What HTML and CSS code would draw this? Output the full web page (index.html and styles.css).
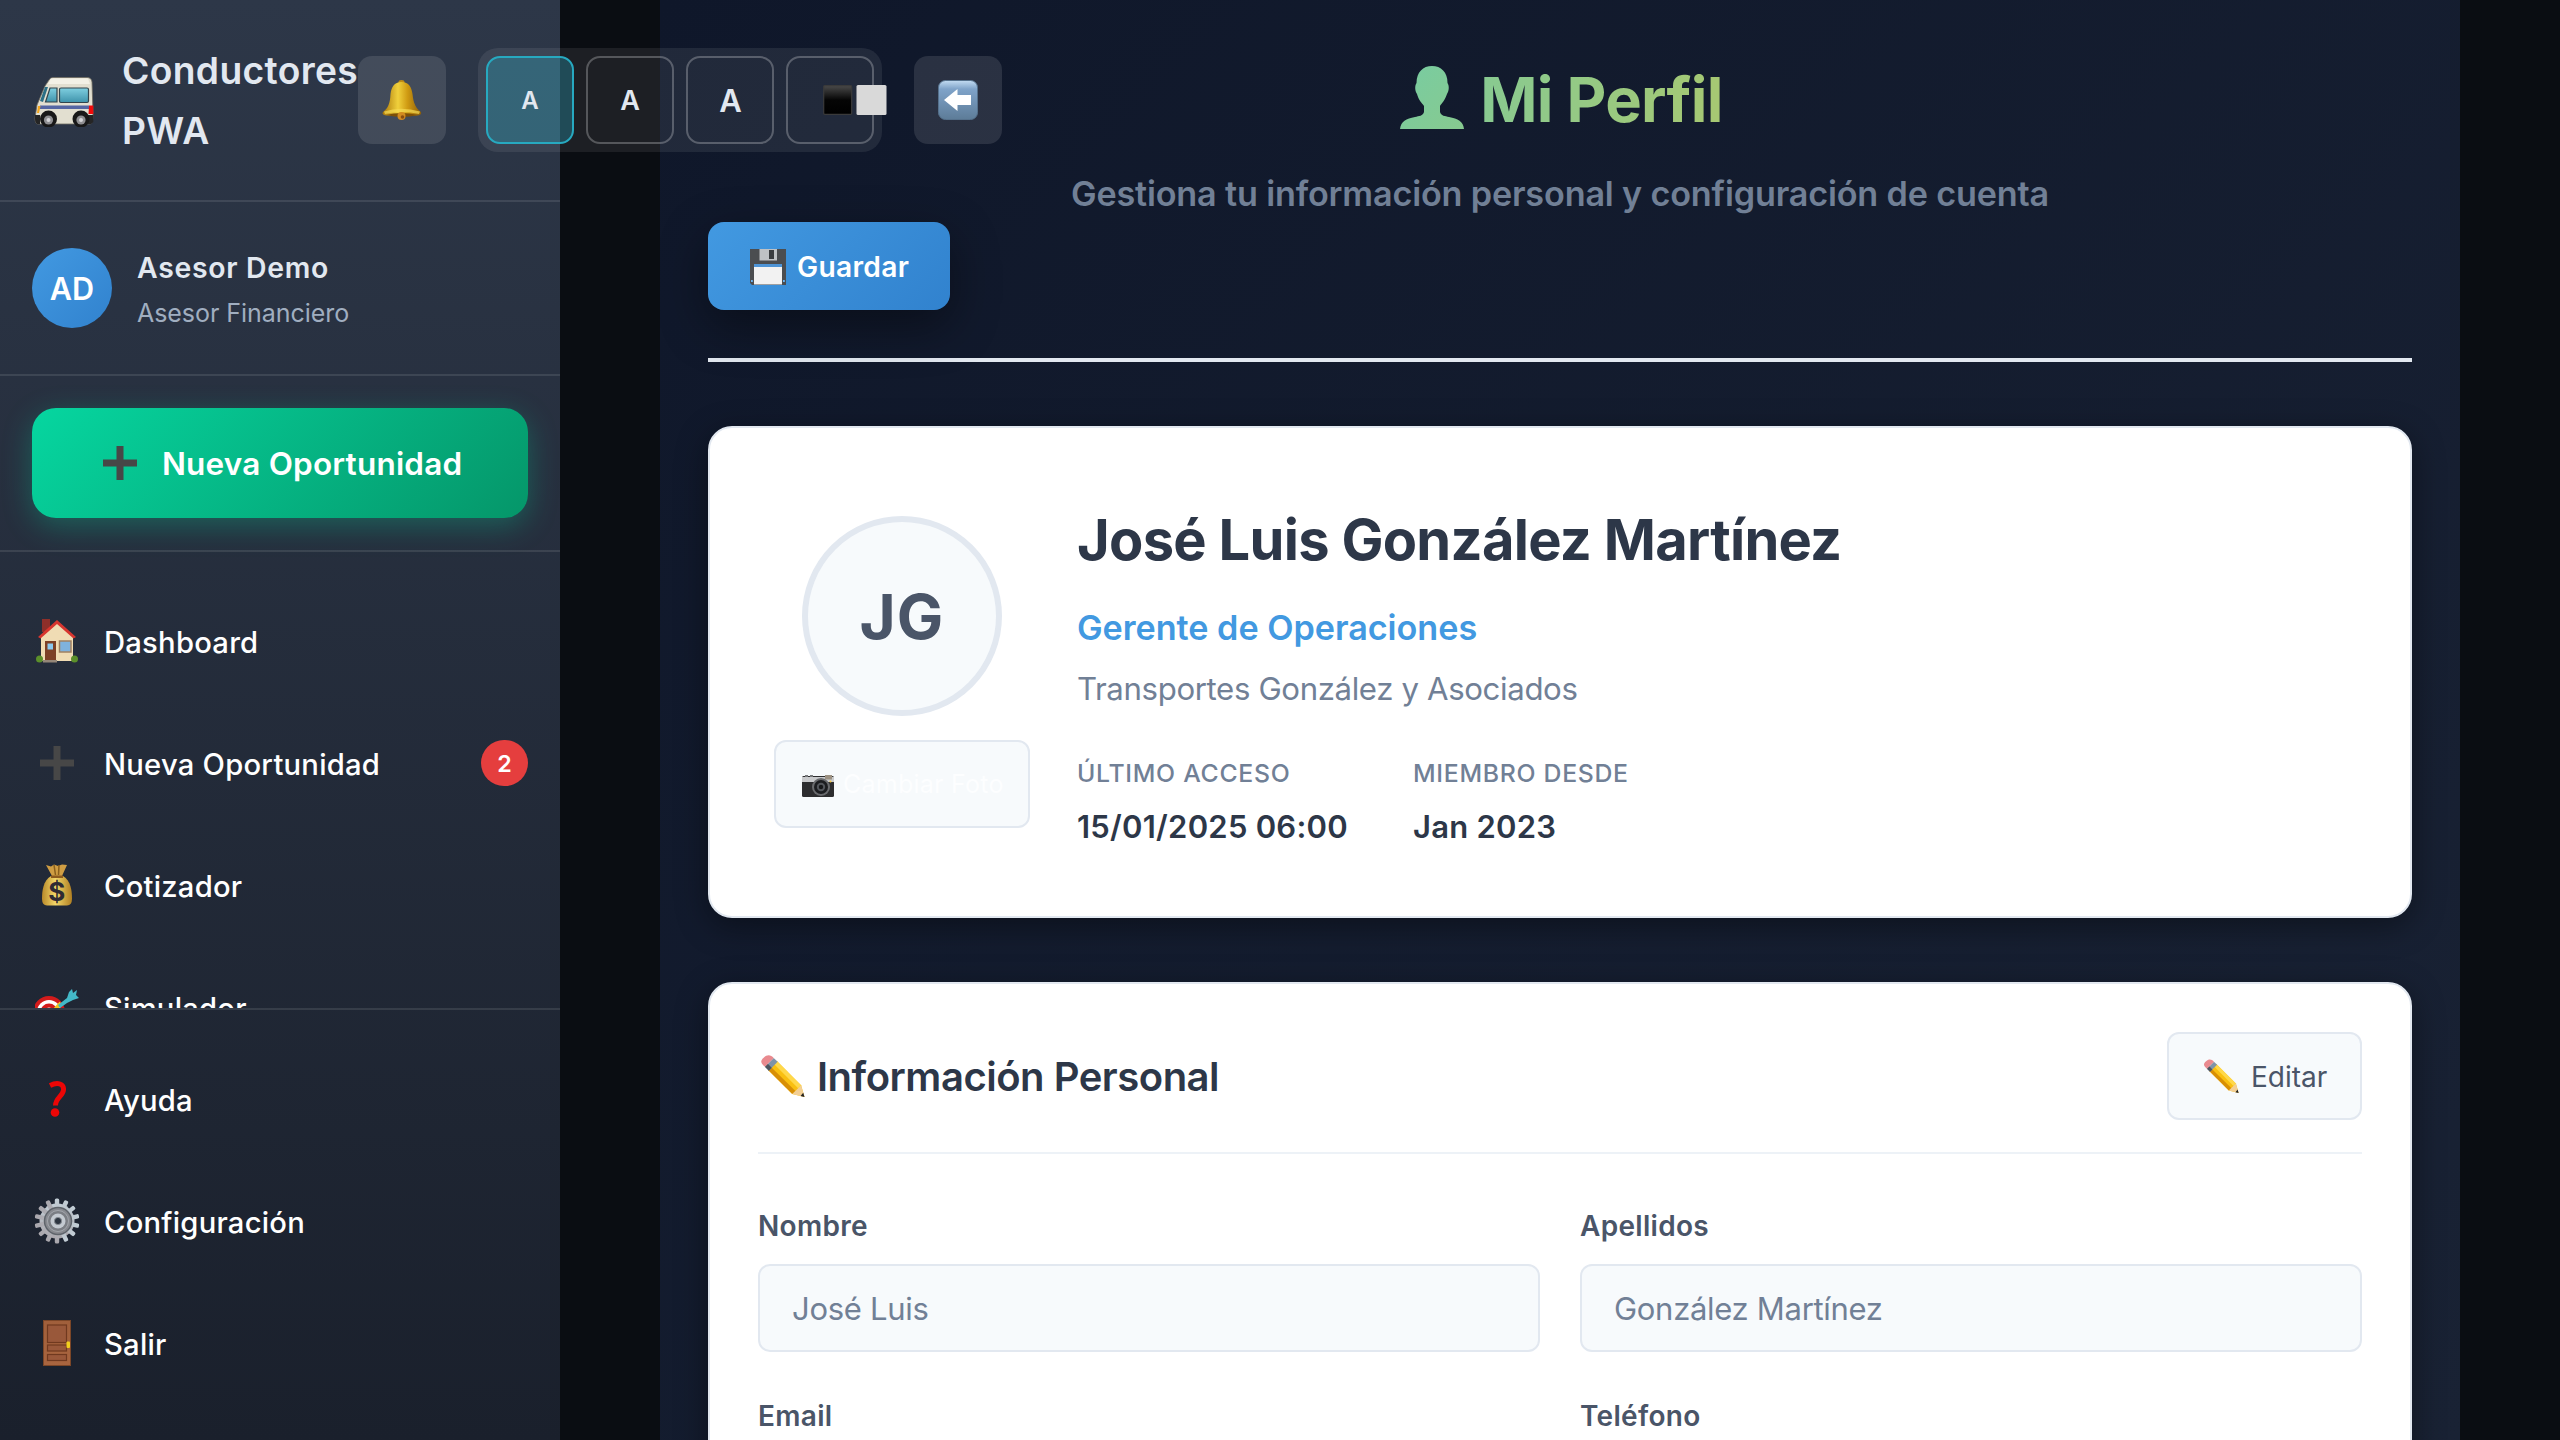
FILE: index.html
```html
<!DOCTYPE html>
<html lang="es">
<head>
<meta charset="utf-8">
<title>Mi Perfil - Conductores PWA</title>
<link rel="stylesheet" href="styles.css">
</head>
<body>
<svg class="defs" width="0" height="0" aria-hidden="true">
  <defs>
    <linearGradient id="wood" x1="0" y1="0" x2="0" y2="1"><stop offset="0" stop-color="#a05f3b"/><stop offset="1" stop-color="#a9653f"/></linearGradient>
    <linearGradient id="glass" x1="0" y1="0" x2="0" y2="1"><stop offset="0" stop-color="#7fcfe0"/><stop offset="1" stop-color="#3f93ab"/></linearGradient>
    <linearGradient id="gold" x1="0" y1="0" x2="1" y2="0"><stop offset="0" stop-color="#a87408"/><stop offset=".4" stop-color="#f0d03c"/><stop offset=".65" stop-color="#cf9a12"/><stop offset="1" stop-color="#8a5c08"/></linearGradient>
    <linearGradient id="sack" x1="0" y1="0" x2="1" y2="0"><stop offset="0" stop-color="#b98a2a"/><stop offset=".45" stop-color="#f3d769"/><stop offset="1" stop-color="#b07f22"/></linearGradient>
    <linearGradient id="steel" x1="0" y1="0" x2="0" y2="1"><stop offset="0" stop-color="#c3ced6"/><stop offset="1" stop-color="#a9a6ac"/></linearGradient>
    <linearGradient id="key" x1="0" y1="0" x2="0" y2="1"><stop offset="0" stop-color="#c3dcf2"/><stop offset=".22" stop-color="#7fa3c9"/><stop offset="1" stop-color="#5d7c98"/></linearGradient>
    <linearGradient id="ink" x1="0" y1="0" x2="0" y2="1"><stop offset="0" stop-color="#4a4a4a"/><stop offset=".5" stop-color="#050505"/><stop offset="1" stop-color="#000"/></linearGradient>
    <linearGradient id="bust" x1="0" y1="0" x2="1" y2="1"><stop offset="0" stop-color="#78cca2"/><stop offset="1" stop-color="#87ca8f"/></linearGradient>
    <symbol id="plus" viewBox="0 0 34 34"><path d="M13.5 0h7v13.500H34v7H20.500V34h-7V20.500H0v-7h13.500z" fill="#474747"/></symbol>
    <symbol id="pencil" viewBox="0 0 46 44">
      <path d="M8 15 17 6 42 31 45.500 43 33 40z" fill="#f9bf10"/>
      <path d="M8 15 11 12 36.500 37 33 40z" fill="#d88f06"/>
      <path d="M14 9 17 6 42 31 39 34z" fill="#ffd84a"/>
      <path d="M33 40 42 31 45.500 43z" fill="#f3cf94"/>
      <path d="M41.500 42 44.200 38.500 45.500 43z" fill="#222"/>
      <path d="M5 12 14 3 18 7 9 16z" fill="#7f93a8"/>
      <path d="M5 12 8 9 12 13 9 16z" fill="#4d5660"/>
      <path d="M5 12 14 3C11-.500 7-.500 4 2.500-.500 6 1 9 5 12z" fill="#e98a8f"/>
    </symbol>
  </defs>
</svg>
<div class="app">
  <aside class="sidebar">
    <header class="sidebar-header">
      <div class="brand">
        <svg class="brand-icon" viewBox="0 0 60 50">
          <path d="M15 3Q16 .500 19 .500H53Q57.500.500 58 5L59 36Q59 47 56 47H4Q1 47 1 41L3 28 11 9Z" fill="#e2dfd0" stroke="#6d6a60" stroke-width=".8"/>
          <path d="M17 1.500H54L56 7H14Z" fill="#f3f1e6"/>
          <path d="M11 10 14 10 9 25 6 24Z" fill="#2c6f86"/>
          <path d="M16 11H23V25H11.500Z" fill="url(#glass)" stroke="#33444b" stroke-width="1.200"/>
          <rect x="25.500" y="11" width="29" height="14.500" rx="1.500" fill="url(#glass)" stroke="#33444b" stroke-width="1.200"/>
          <path d="M6 28.500H55V32H5Z" fill="#5566a3"/>
          <path d="M55 28.500H59.300V37H54.500Z" fill="#f00b0b"/>
          <path d="M4 29H6.500L5 36H3Z" fill="#f4a51c"/>
          <path d="M1 38H6V47H3Q1 46 1 42ZM53 38H59.300V45L57 47H53Z" fill="#252525"/>
          <circle cx="14.500" cy="42" r="8.500" fill="#181818"/><circle cx="14.500" cy="43" r="4.600" fill="#8f8f92"/><circle cx="14.500" cy="43" r="2" fill="#d5d5d8"/>
          <circle cx="47" cy="42" r="8.500" fill="#181818"/><circle cx="47" cy="43" r="4.600" fill="#8f8f92"/><circle cx="47" cy="43" r="2" fill="#d5d5d8"/>
        </svg>
        <span class="brand-name">Conductores<br>PWA</span>
      </div>
      <div class="header-controls">
        <button class="icon-button" aria-label="Notificaciones">
          <svg class="bell" viewBox="0 0 40 40">
            <ellipse cx="19.500" cy="2" rx="3" ry="2" fill="#c08c14"/>
            <path d="M19.500 2C27 2 29.500 7 30.500 14 31.500 24 34 28 39 32Q40 35 35 35.500H5Q-1 35 1 32C6 28 8 24 8.500 14 9.500 7 12 2 19.500 2Z" fill="url(#gold)"/>
            <path d="M2 31.500Q19 26 38 31.500L37 34Q20 30 3 34Z" fill="#f6dc55" opacity=".7"/>
            <path d="M4 35Q19 31 36 35Q20 39 4 35Z" fill="#7d4f08"/>
            <circle cx="19.500" cy="36" r="4" fill="#d38a20"/><circle cx="20.500" cy="37" r="1.800" fill="#8b4d0e"/>
          </svg>
        </button>
        <div class="a11y-group">
          <button class="a11y-button a11y-small is-active">A</button>
          <button class="a11y-button a11y-medium">A</button>
          <button class="a11y-button a11y-large">A</button>
          <button class="a11y-button a11y-contrast" aria-label="Contraste">
            <svg viewBox="0 0 64 30"><rect x=".700" y=".700" width="28" height="28.600" rx="1" fill="url(#ink)" stroke="#3a3a3a" stroke-width="1.200"/><rect x="33.500" width="30" height="30" rx="1.500" fill="#d9d9d9"/></svg>
          </button>
        </div>
        <button class="icon-button" aria-label="Contraer">
          <svg class="arrow" viewBox="0 0 40 40"><rect x=".5" y=".5" width="39" height="39" rx="7" fill="url(#key)" stroke="#55718c"/><path d="M6 20 19.500 9V15H33V25H19.500V31Z" fill="#fff"/></svg>
        </button>
      </div>
    </header>
    <section class="user">
      <div class="user-avatar">AD</div>
      <div class="user-text">
        <div class="user-name">Asesor Demo</div>
        <div class="user-role">Asesor Financiero</div>
      </div>
    </section>
    <section class="cta-wrap">
      <button class="cta"><svg class="cta-icon"><use href="#plus"/></svg><span>Nueva Oportunidad</span></button>
    </section>
    <nav class="nav">
      <a class="nav-item"><span class="nav-icon"><svg width="42" height="44" viewBox="0 0 42 44">
        <rect x="6" y="0" width="8" height="13" fill="#8e2f2a"/>
        <path d="M5 18 21 4 37 18V42H5Z" fill="#f0dcb4"/>
        <path d="M2 18 21 1 40 18 37.500 19.500 21 5 4.500 19.500Z" fill="#d8362f"/>
        <rect x="9" y="22" width="11" height="20" fill="#7d4026"/><rect x="11.500" y="24.500" width="5.500" height="6" fill="#8cc8ee"/>
        <rect x="23.500" y="22" width="11.500" height="11" fill="#7fb2dd" stroke="#a08060" stroke-width="1.500"/>
        <rect x="7" y="41" width="14" height="2.500" fill="#948678"/>
        <circle cx="3.500" cy="40" r="3.500" fill="#5b8f2a"/><circle cx="38.500" cy="40" r="3.500" fill="#5b8f2a"/>
      </svg></span><span>Dashboard</span></a>
      <a class="nav-item"><span class="nav-icon"><svg width="34" height="34"><use href="#plus"/></svg></span><span>Nueva Oportunidad</span><span class="badge">2</span></a>
      <a class="nav-item"><span class="nav-icon"><svg width="32" height="42" viewBox="0 0 32 42">
        <path d="M5 1 10 2.500 13 .500 17 2 21 .500 26 1 21 12H11Z" fill="#cf9d43"/>
        <path d="M13 1 14.500 11M18 1 17.500 11" stroke="#8a5f1c" stroke-width="1.500"/>
        <path d="M10 12H22C30 17 31 27 31 35Q31 41 26 41.500H6Q1 41 1 35C1 27 2 17 10 12Z" fill="url(#sack)"/>
        <path d="M10 11.500H22V14H10Z" fill="#8d5b1e"/>
        <text x="16" y="36.500" text-anchor="middle" class="coin">$</text>
      </svg></span><span>Cotizador</span></a>
      <a class="nav-item"><span class="nav-icon"><svg class="target" width="44" height="44" viewBox="0 0 44 44">
        <circle cx="14" cy="24" r="16" fill="#d31b1b"/><circle cx="14" cy="24" r="12" fill="#fff"/><circle cx="14" cy="24" r="8.500" fill="#d31b1b"/><circle cx="14" cy="24" r="4.500" fill="#fff"/>
        <path d="M18 24 26 15" stroke="#f5c51b" stroke-width="4"/><path d="M23 17 32 10 34 4 37 1 38 5 42 2 41 7 44 10 38 12 32 15 25 20Z" fill="#43b9c8"/>
      </svg></span><span>Simulador</span></a>
    </nav>
    <footer class="sidebar-footer">
      <a class="nav-item"><span class="nav-icon"><svg width="18" height="36" viewBox="0 0 18 36"><path d="M2 4.500C10 .500 16 3 15.500 9 15 15 7.500 17 7.500 24.500" fill="none" stroke="#ec0606" stroke-width="5"/><circle cx="7" cy="31.500" r="4.300" fill="#ec0606"/></svg></span><span>Ayuda</span></a>
      <a class="nav-item"><span class="nav-icon"><svg width="46" height="46" viewBox="-23 -23 46 46">
        <g fill="url(#steel)"><circle r="17.500"/>
        <g><rect x="-2.200" y="-22.500" width="4.400" height="45" rx="1.500"/><rect x="-2.200" y="-22.500" width="4.400" height="45" rx="1.500" transform="rotate(25.700)"/><rect x="-2.200" y="-22.500" width="4.400" height="45" rx="1.500" transform="rotate(51.400)"/><rect x="-2.200" y="-22.500" width="4.400" height="45" rx="1.500" transform="rotate(77.100)"/><rect x="-2.200" y="-22.500" width="4.400" height="45" rx="1.500" transform="rotate(102.800)"/><rect x="-2.200" y="-22.500" width="4.400" height="45" rx="1.500" transform="rotate(128.500)"/><rect x="-2.200" y="-22.500" width="4.400" height="45" rx="1.500" transform="rotate(154.300)"/></g></g>
        <circle cx="1" r="13.500" fill="#87898f" stroke="#5f646b" stroke-width="1.500"/><circle cx="1" r="10.500" fill="#7b7e84" stroke="#a3a7ad"/><circle cx="1" r="7.500" fill="#c4cad1"/><circle cx="1" r="3.600" fill="#2d3540" stroke="#858a91"/>
      </svg></span><span>Configuración</span></a>
      <a class="nav-item"><span class="nav-icon"><svg width="28" height="46" viewBox="0 0 28 46">
        <rect x=".5" y=".5" width="27" height="45" fill="url(#wood)" stroke="#7c4627"/>
        <g fill="#99583a" stroke="#70391f" stroke-width="1.200"><rect x="4.500" y="5" width="19" height="17.500"/><rect x="4.500" y="25" width="19" height="6"/><rect x="4.500" y="34.500" width="19" height="6"/></g>
        <rect x="23.500" y="21.500" width="3.500" height="6.500" rx="1" fill="#f2cf1d"/>
      </svg></span><span>Salir</span></a>
    </footer>
  </aside>
  <main class="content">
    <header class="page-header">
      <h1 class="page-title">
        <svg class="bust" viewBox="0 0 64 63"><path d="M32 0C41 0 47.500 6 47.500 17 49.500 20 49 25 47 28 45 34 42 37 40 40V46C41 50 45 50 49 51 58 53 63 55 64 63H0C1 55 6 53 15 51 19 50 23 50 24 46V40C22 37 18.500 34 17 28 15 25 14.500 20 16.500 17 16.500 6 23 0 32 0Z" fill="url(#bust)"/></svg>
        <span class="page-title-text">Mi Perfil</span>
      </h1>
      <p class="page-subtitle">Gestiona tu información personal y configuración de cuenta</p>
      <button class="save"><svg class="floppy" viewBox="0 0 36 36">
        <path d="M0 0H36V36H2L0 34Z" fill="#4b4d50"/><rect x="9.500" y="0" width="17.500" height="11.500" fill="#bfc1c4"/><rect x="19" y="1" width="5" height="9" fill="#3a3c3f"/>
        <rect x="4" y="15" width="28" height="20.500" fill="#f2f2f2"/><rect x="4" y="15" width="28" height="3" fill="#4e94d6"/><rect x="1" y="31" width="1.800" height="2" fill="#6bb3f0"/><rect x="33" y="31" width="1.800" height="2" fill="#6bb3f0"/>
      </svg><span>Guardar</span></button>
    </header>
    <section class="card profile">
      <div class="photo">
        <div class="photo-circle">JG</div>
        <button class="photo-button"><svg class="camera" viewBox="0 0 32 22">
          <rect y="1" width="32" height="21" rx="1.500" fill="#2d2d2f"/><rect y="2" width="32" height="5" fill="#c9cacc"/><rect x="3" y="0" width="3" height="2" fill="#77797b"/><rect x="8" y="0" width="3" height="2" fill="#77797b"/><rect x="23" y="0" width="7" height="4.500" fill="#9c9182"/>
          <circle cx="19" cy="12" r="9" fill="#6a6b6e"/><circle cx="19" cy="12" r="7" fill="#1c1d20"/><circle cx="19" cy="12" r="4.200" fill="#53565b"/><circle cx="19" cy="12" r="2.200" fill="#17181a"/><circle cx="28.500" cy="6.500" r="1" fill="#f5c842"/>
        </svg><span>Cambiar Foto</span></button>
      </div>
      <div class="profile-info">
        <h2 class="profile-name">José Luis González Martínez</h2>
        <p class="profile-role">Gerente de Operaciones</p>
        <p class="profile-company">Transportes González y Asociados</p>
        <div class="stats">
          <div class="stat"><div class="stat-label">Último acceso</div><div class="stat-value">15/01/2025 06:00</div></div>
          <div class="stat"><div class="stat-label">Miembro desde</div><div class="stat-value">Jan 2023</div></div>
        </div>
      </div>
    </section>
    <section class="card details">
      <div class="details-header">
        <h3 class="details-title"><svg class="pencil-lg"><use href="#pencil"/></svg><span>Información Personal</span></h3>
        <button class="edit"><svg class="pencil-sm"><use href="#pencil"/></svg><span>Editar</span></button>
      </div>
      <div class="fields">
        <div class="field"><label class="label">Nombre</label><div class="input">José Luis</div></div>
        <div class="field"><label class="label">Apellidos</label><div class="input">González Martínez</div></div>
        <div class="field"><label class="label">Email</label><div class="input"></div></div>
        <div class="field"><label class="label">Teléfono</label><div class="input"></div></div>
      </div>
    </section>
  </main>
</div>
</body>
</html>
```
FILE: styles.css
```css
* { box-sizing: border-box; margin: 0; padding: 0; }
body { background: #0a0d12; font-family: Inter, "Liberation Sans", sans-serif; overflow: hidden; }
button { font: inherit; color: inherit; border: 0; background: none; }
svg { display: block; flex: none; }
.defs { position: absolute; }
.app { display: flex; height: 1440px; overflow: hidden; }

/* Sidebar */
.sidebar { position: relative; z-index: 2; flex: none; width: 560px; height: 1440px; display: flex; flex-direction: column; background: linear-gradient(180deg, #2d3748, #1a202c); color: #fff; }
.sidebar-header { flex: none; height: 202px; padding-left: 32px; display: flex; align-items: center; border-bottom: 2px solid rgba(255,255,255,.1); }
.brand { flex: none; width: 326px; display: flex; align-items: center; }
.brand-icon { width: 60px; height: 50px; margin: 4px 28px 0 2px; }
.brand-name { padding-top: 2px; font-size: 37.2px; font-weight: 600; line-height: 60px; letter-spacing: .35px; color: #e2e8f0; }
.header-controls { flex: none; display: flex; align-items: center; gap: 32px; }
.icon-button { width: 88px; height: 88px; border-radius: 14px; background: rgba(255,255,255,.11); display: flex; align-items: center; justify-content: center; }
.bell { width: 40px; height: 40px; }
.arrow { width: 40px; height: 40px; }
.a11y-group { display: flex; gap: 12px; padding: 8px; border-radius: 20px; background: rgba(255,255,255,.08); }
.a11y-button { width: 88px; height: 88px; border: 2px solid rgba(255,255,255,.25); border-radius: 14px; color: #e2e8f0; font-weight: 600; display: flex; align-items: center; justify-content: center; }
.a11y-button.is-active { background: rgba(38,168,192,.33); border-color: #27a9c0; }
.a11y-small { font-size: 24px; }
.a11y-medium { font-size: 27px; }
.a11y-large { font-size: 31px; padding-left: 1px; }
.a11y-contrast { justify-content: flex-start; padding-left: 35px; }
.a11y-contrast svg { width: 64px; height: 30px; }

.user { flex: none; height: 174px; padding: 0 32px; display: flex; align-items: center; gap: 24px; border-bottom: 2px solid rgba(255,255,255,.1); }
.user-avatar { width: 80px; height: 80px; border-radius: 50%; background: linear-gradient(135deg, #4299e1, #3182ce); display: flex; align-items: center; justify-content: center; font-size: 30.6px; font-weight: 600; }
.user-text { padding: 2px 0 0 1px; }
.user-name { font-size: 28.4px; font-weight: 600; line-height: 46px; letter-spacing: .7px; color: #e2e8f0; }
.user-role { margin-top: 1px; font-size: 25px; line-height: 42px; letter-spacing: -.05px; color: #a0aec0; }

.cta-wrap { flex: none; height: 176px; padding: 32px 32px 0; border-bottom: 2px solid rgba(255,255,255,.1); }
.cta { width: 100%; height: 110px; padding-left: 71px; border-radius: 24px; display: flex; align-items: center; gap: 25px; background: linear-gradient(135deg, #06d6a0, #059669); box-shadow: 0 8px 30px rgba(6,214,160,.3); font-size: 31.5px; font-weight: 600; letter-spacing: .2px; }
.cta-icon { width: 34px; height: 34px; }

.nav { flex: none; height: 456px; padding-top: 29px; overflow: hidden; }
.nav-item { height: 122px; padding: 0 32px; display: flex; align-items: center; gap: 22px; font-size: 29.2px; font-weight: 500; letter-spacing: .24px; }
.nav-icon { width: 50px; display: flex; justify-content: center; padding-bottom: 3px; }
.coin { font: 700 26px Inter, sans-serif; fill: #2f2a33; }
.target { margin-top: 6px; }
.badge { margin-left: auto; width: 47px; height: 46px; margin-bottom: 2px; border-radius: 23px; background: #e53e3e; display: flex; align-items: center; justify-content: center; font-size: 23.3px; font-weight: 600; letter-spacing: 0; }
.sidebar-footer { flex: 1; padding-top: 29px; border-top: 2px solid rgba(255,255,255,.1); }

/* Page */
.content { flex: none; width: 1800px; height: 1440px; margin-left: 100px; padding: 48px 48px 0; overflow: hidden; background: linear-gradient(135deg, #0f172a, #192234); }
.page-header { padding-bottom: 48px; margin-bottom: 64px; border-bottom: 4px solid #e2e8f0; }
.page-title { height: 102px; padding: 1px 0 0 3px; display: flex; align-items: center; justify-content: center; gap: 16px; font-size: 61.5px; font-weight: 700; letter-spacing: -.75px; line-height: 102px; }
.bust { width: 64px; height: 63px; margin-bottom: 5px; }
.page-title-text { background: linear-gradient(100deg, #87ca92, #a8c871); -webkit-background-clip: text; background-clip: text; color: transparent; }
.page-subtitle { margin-top: 15px; text-align: center; font-size: 34.2px; font-weight: 600; letter-spacing: -.17px; line-height: 57px; color: #718096; }
.save { width: 242px; height: 88px; padding: 1px 0 0 42px; border-radius: 16px; display: flex; align-items: center; gap: 11px; background: linear-gradient(135deg, #4299e1, #3182ce); box-shadow: 0 16px 48px rgba(0,0,0,.4); color: #fff; font-size: 28.2px; font-weight: 600; letter-spacing: .3px; }
.floppy { width: 36px; height: 36px; }

.card { background: #fff; border: 2px solid #e2e8f0; border-radius: 24px; box-shadow: 0 8px 32px rgba(0,0,0,.4); }
.profile { display: flex; align-items: center; gap: 47px; padding: 64px; height: 492px; }
.photo { width: 256px; display: flex; flex-direction: column; align-items: center; gap: 24px; }
.photo-circle { width: 200px; height: 200px; border-radius: 50%; border: 6px solid #e2e8f0; background: #f7fafc; display: flex; align-items: center; justify-content: center; font-size: 62px; font-weight: 700; letter-spacing: 1px; color: #4a5568; }
.photo-button { width: 256px; height: 88px; padding-left: 26px; border: 2px solid #e2e8f0; border-radius: 12px; background: #f7fafc; display: flex; align-items: center; gap: 9px; color: #fdfeff; font-size: 25px; letter-spacing: .25px; }
.camera { width: 32px; height: 22px; margin-top: 3px; }
.profile-name { font-size: 56px; font-weight: 700; line-height: 97px; letter-spacing: -.7px; color: #2d3748; }
.profile-role { margin-top: 11px; font-size: 34.2px; font-weight: 600; line-height: 56px; letter-spacing: -.03px; color: #4299e1; }
.profile-company { margin-top: 8px; font-size: 31.2px; line-height: 51px; letter-spacing: -.37px; color: #718096; }
.stats { display: flex; gap: 65px; margin-top: 37px; }
.stat { width: 271px; white-space: nowrap; }
.stat-label { font-size: 24.8px; font-weight: 500; line-height: 42px; letter-spacing: .7px; text-transform: uppercase; color: #718096; }
.stat-value { margin-top: 7px; font-size: 31px; font-weight: 600; line-height: 51px; letter-spacing: .24px; color: #2d3748; }

.details { margin-top: 64px; padding: 48px; }
.details-header { display: flex; align-items: center; justify-content: space-between; padding-bottom: 32px; border-bottom: 2px solid #edf2f7; }
.details-title { display: flex; align-items: center; gap: 12px; padding-left: 2px; font-size: 40px; font-weight: 600; letter-spacing: -.48px; color: #2d3748; }
.pencil-lg { width: 45px; height: 43px; }
.edit { width: 195px; height: 88px; padding: 1px 0 0 34px; border: 2px solid #e2e8f0; border-radius: 12px; background: #f7fafc; display: flex; align-items: center; gap: 12px; color: #4a5568; font-size: 28px; }
.pencil-sm { width: 36px; height: 35px; }
.fields { display: grid; grid-template-columns: 1fr 1fr; gap: 42px 40px; margin-top: 50px; }
.field { display: flex; flex-direction: column; gap: 16px; }
.label { font-size: 28px; font-weight: 600; line-height: 44px; letter-spacing: .3px; color: #4a5568; }
.input { height: 88px; padding-left: 32px; border: 2px solid #e2e8f0; border-radius: 12px; background: #f7fafc; display: flex; align-items: center; color: #718096; font-size: 31px; letter-spacing: -.3px; }
```
